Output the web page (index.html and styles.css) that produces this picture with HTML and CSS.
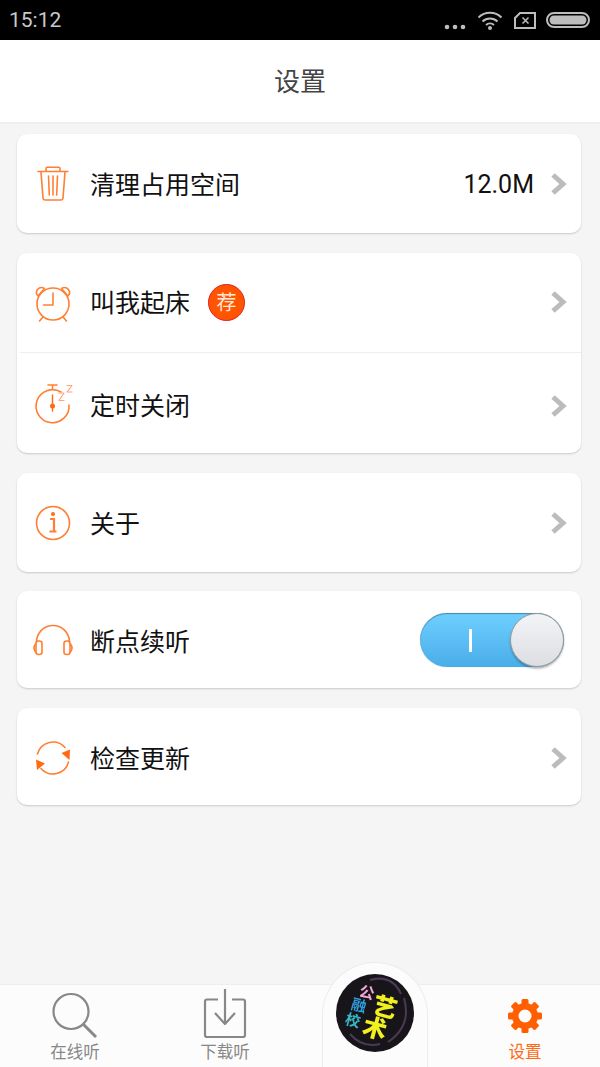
FILE: index.html
```html
<!DOCTYPE html>
<html lang="zh-CN">
<head>
<meta charset="utf-8">
<title>设置</title>
<link rel="stylesheet" href="styles.css">
</head>
<body>
<div class="screen">
  <div class="status">
    <span class="clock">15:12</span>
    <div class="status-icons">
      <svg class="s-dots" width="22" height="6" viewBox="0 0 22 6"><circle cx="3" cy="3" r="2.3"/><circle cx="11" cy="3" r="2.3"/><circle cx="19" cy="3" r="2.3"/></svg>
      <svg class="s-wifi" width="26" height="20" viewBox="0 0 26 20"><path class="s-line" d="M1.500 7.500a16.500 16.500 0 0 1 23 0M5.500 11.500a11 11 0 0 1 15 0M9 15a6 6 0 0 1 8 0"/><circle class="s-fill" cx="13" cy="18" r="2"/></svg>
      <svg class="s-sim" width="22" height="17" viewBox="0 0 22 17"><path class="s-line" d="M6 1h15v15H1V6z"/><path class="s-x" d="M8.500 5.500l6 6M14.500 5.500l-6 6"/></svg>
      <svg class="s-batt" width="44" height="16" viewBox="0 0 44 16"><rect class="s-line" x="1" y="1" width="42" height="14" rx="7"/><rect class="s-fill" x="3.500" y="3.500" width="37" height="9" rx="4.500"/></svg>
    </div>
  </div>
  <header class="title-bar"><h1 class="title">设置</h1></header>
  <main class="list">
    <section class="card">
      <div class="row row-99">
        <svg class="icon" viewBox="0 0 50 50"><path d="M10 12.500h30M18 12v-2.500q0-1.200 1.200-1.200h11.600q1.200 0 1.200 1.200V12M13 13l2 26q.2 2 2.200 2h15.600q2 0 2.200-2l2-26M20.500 17l.8 19M25 17v19M29.500 17l-.8 19"/></svg>
        <span class="label">清理占用空间</span>
        <span class="value">12.0M</span>
        <svg class="chev" viewBox="0 0 18 24"><path d="M3 3l10 9-10 9"/></svg>
      </div>
    </section>
    <section class="card">
      <div class="row row-100 row-split">
        <svg class="icon" viewBox="0 0 50 50"><circle cx="25" cy="28" r="16"/><path d="M25 17v12h-9.500M15 41l-3.500 4M35 41l3.500 4M10 20q-3-3-.5-6.500 3-3.500 7-1zM40 20q3-3 .5-6.500-3-3.500-7-1z"/></svg>
        <span class="label">叫我起床</span>
        <span class="badge">荐</span>
        <svg class="chev chev-end" viewBox="0 0 18 24"><path d="M3 3l10 9-10 9"/></svg>
      </div>
      <div class="row row-100 row-low">
        <svg class="icon" viewBox="0 0 50 50"><path d="M33 13A16.500 16.500 0 1 0 41 26M24.500 10.500V6.500M20 6h9"/><path class="needle" d="M24.500 16v16"/><circle class="solid" cx="24.500" cy="27" r="2.500"/><path class="thin" d="M31 14h5l-5 7.500h5M39 6.500h5l-5 6.500h5"/></svg>
        <span class="label">定时关闭</span>
        <svg class="chev chev-end" viewBox="0 0 18 24"><path d="M3 3l10 9-10 9"/></svg>
      </div>
    </section>
    <section class="card">
      <div class="row row-99">
        <svg class="icon" viewBox="0 0 50 50"><circle cx="25" cy="25" r="16.500"/><circle class="solid" cx="25" cy="16" r="2"/><path class="i-stem" d="M22 21h4v12M21.500 33.500h7"/></svg>
        <span class="label">关于</span>
        <svg class="chev chev-end" viewBox="0 0 18 24"><path d="M3 3l10 9-10 9"/></svg>
      </div>
    </section>
    <section class="card card-tight">
      <div class="row row-97 row-low">
        <svg class="icon" viewBox="0 0 50 50"><path d="M8.500 26a16.500 16.500 0 0 1 33 0"/><rect x="8" y="25" width="6" height="13.500" rx="2.500"/><rect x="36" y="25" width="6" height="13.500" rx="2.500"/><path d="M7.500 28q-3 4 0 8M42.500 28q3 4 0 8"/></svg>
        <span class="label">断点续听</span>
        <div class="switch"><span class="switch-mark"></span><span class="switch-knob"></span></div>
      </div>
    </section>
    <section class="card">
      <div class="row row-97 row-low">
        <svg class="icon" viewBox="0 0 50 50"><path d="M9.500 21A16 16 0 0 1 37 14.500M40.500 29A16 16 0 0 1 13 35.500"/><path class="solid" d="M42 16.500L41.500 27l-8-7zM8 26.500l1 10.500 8-6.500z"/></svg>
        <span class="label">检查更新</span>
        <svg class="chev chev-end" viewBox="0 0 18 24"><path d="M3 3l10 9-10 9"/></svg>
      </div>
    </section>
  </main>
  <nav class="tabs">
    <div class="tab">
      <svg class="tab-icon" viewBox="0 0 50 50"><circle cx="21" cy="22.500" r="17.500"/><path class="tab-handle" d="M33 35l13 13"/></svg>
      <span class="tab-label">在线听</span>
    </div>
    <div class="tab">
      <svg class="tab-icon" viewBox="0 0 50 50"><path d="M18 10.500H7q-2 0-2 2v33.500q0 2 2 2h36q2 0 2-2V12.500q0-2-2-2H32M25 0v35M15 24l10 11 10-11"/></svg>
      <span class="tab-label">下载听</span>
    </div>
    <div class="tab tab-center">
      <div class="bump">
        <svg class="logo" viewBox="0 0 78 78">
          <circle class="logo-bg" cx="39" cy="39" r="39"/>
          <path class="logo-arc" d="M34 6q22-6 31 14M68 24q8 28-16 44M14 60q12 14 30 10"/>
          <text class="lg lg-pink" x="31" y="24" transform="rotate(15 31 18)">公</text>
          <text class="lg lg-blue" x="23" y="37" transform="rotate(15 23 31)">融</text>
          <text class="lg lg-cyan" x="17" y="52" transform="rotate(15 17 46)">校</text>
          <text class="lg lg-big" x="49" y="42" transform="rotate(15 49 33)">艺</text>
          <text class="lg lg-big" x="39" y="63" transform="rotate(15 39 54)">术</text>
        </svg>
      </div>
    </div>
    <div class="tab tab-active">
      <svg class="tab-icon" viewBox="0 0 50 50">
        <g class="gear">
          <circle class="gear-ring" cx="25" cy="27" r="10.500"/>
          <rect x="21.500" y="10" width="7" height="34" rx="1.500"/>
          <rect x="21.500" y="10" width="7" height="34" rx="1.500" transform="rotate(45 25 27)"/>
          <rect x="21.500" y="10" width="7" height="34" rx="1.500" transform="rotate(90 25 27)"/>
          <rect x="21.500" y="10" width="7" height="34" rx="1.500" transform="rotate(135 25 27)"/>
          <circle class="gear-body" cx="25" cy="27" r="13"/>
          <circle class="gear-hole" cx="25" cy="27" r="6.500"/>
        </g>
      </svg>
      <span class="tab-label">设置</span>
    </div>
  </nav>
</div>
</body>
</html>
```
FILE: styles.css
```css
* { box-sizing: border-box; }
html, body { margin: 0; padding: 0; }
body {
  font-family: "Noto Sans CJK SC", "Noto Sans", sans-serif;
  background: #f5f5f5;
}
.screen {
  width: 600px;
  height: 1067px;
  display: flex;
  flex-direction: column;
  overflow: hidden;
  background: #f5f5f5;
}
.status {
  height: 40px;
  flex: none;
  background: #000;
  display: flex;
  align-items: center;
  justify-content: space-between;
  padding: 0 10px 0 9px;
}
.clock {
  font-family: Roboto, sans-serif;
  font-size: 21px;
  color: #c8c8c8;
  line-height: 40px;
}
.status-icons { display: flex; align-items: center; }
.s-dots { fill: #bdbdbd; margin-top: 14px; margin-right: 11px; }
.s-wifi { margin-right: 11px; margin-top: -1px; }
.s-sim { margin-right: 10px; }
.s-line { fill: none; stroke: #bdbdbd; stroke-width: 2; }
.s-x { fill: none; stroke: #bdbdbd; stroke-width: 1.500; }
.s-fill { fill: #bdbdbd; }
.title-bar {
  height: 84px;
  flex: none;
  background: #fff;
  border-bottom: 2px solid #eee;
  padding-bottom: 2px;
  display: flex;
  align-items: center;
  justify-content: center;
}
.title {
  margin: 0;
  font-size: 26px;
  font-weight: 400;
  color: #444;
  line-height: 1;
}
.list {
  flex: 1;
  display: flex;
  flex-direction: column;
  gap: 20px;
  padding: 10px 19px 0 17px;
}
.card {
  background: #fff;
  border-radius: 10px;
  box-shadow: 0 1px 2px rgba(0, 0, 0, .18);
}
.card-tight { margin-top: -1px; }
.row {
  display: flex;
  align-items: center;
  padding-right: 13px;
}
.row-99 { height: 99px; }
.row-100 { height: 100px; }
.row-97 { height: 97px; }
.row-split {
  border-bottom: 1px solid #eee;
  margin-left: 3px;
  padding-bottom: 3px;
}
.row-split .icon { margin-left: 8px; }
.row-split .chev { margin-top: 2px; }
.row-100.row-low .chev { margin-top: 4px; }
.row-low { padding-top: 2px; }
.icon {
  width: 50px;
  height: 50px;
  flex: none;
  margin-left: 11px;
  margin-right: 12px;
  fill: none;
  stroke: #ff7f33;
  stroke-width: 1.600;
  stroke-linecap: round;
  stroke-linejoin: round;
}
.icon .solid { fill: #ff6a13; stroke: none; }
.icon .needle { stroke: #ff6a13; stroke-width: 1.400; }
.icon .thin { stroke-width: 1.200; stroke: #ffa878; }
.icon .i-stem { stroke-width: 2.200; stroke-linecap: butt; stroke-linejoin: miter; }
.label {
  font-size: 25px;
  color: #111;
  line-height: 1;
  white-space: nowrap;
}
.value {
  margin-left: auto;
  margin-right: 16px;
  margin-top: 2px;
  font-family: Roboto, sans-serif;
  font-size: 25px;
  color: #111;
  line-height: 1;
}
.chev {
  width: 18px;
  height: 24px;
  flex: none;
  fill: none;
  stroke: #bcbcbc;
  stroke-width: 5;
}
.chev-end { margin-left: auto; }
.badge {
  width: 37px;
  height: 37px;
  flex: none;
  margin-left: 18px;
  margin-top: 2px;
  border-radius: 50%;
  background: #ff5400;
  border: 1.500px solid #e2202a;
  color: #ffe9dc;
  font-size: 20px;
  line-height: 33px;
  text-align: center;
}
.switch {
  margin-left: auto;
  margin-right: 4px;
  margin-top: -1px;
  width: 144px;
  height: 54px;
  position: relative;
  display: flex;
  align-items: center;
  padding-left: 49px;
  border-radius: 27px;
  background: linear-gradient(#6fcfff, #49ade8);
  box-shadow: inset 0 1px 1px rgba(0, 0, 0, .35), 0 0 1px rgba(0, 0, 0, .3);
}
.switch-mark {
  width: 3px;
  height: 23px;
  background: #fff;
}
.switch-knob {
  position: absolute;
  right: 0;
  top: 0;
  width: 54px;
  height: 54px;
  border-radius: 50%;
  background: linear-gradient(#f3f4f6, #dcdee2);
  border: 1.500px solid #9a9a9a;
  box-shadow: 0 2px 2px rgba(0, 0, 0, .25);
}
.tabs {
  height: 83px;
  flex: none;
  background: #fcfcfc;
  border-top: 1px solid #eee;
  display: flex;
}
.tab {
  width: 150px;
  flex: none;
  display: flex;
  flex-direction: column;
  align-items: center;
  position: relative;
}
.tab-icon {
  width: 50px;
  height: 50px;
  margin-top: 4px;
  fill: none;
  stroke: #888;
  stroke-width: 2.200;
  stroke-linejoin: round;
}
.tab-handle { stroke-width: 3; }
.tab-label {
  font-size: 16.500px;
  line-height: 16px;
  margin-top: 4px;
  color: #888;
}
.tab-active .tab-label { color: #ff6a13; }
.gear rect, .gear-body { fill: #ff5f00; stroke: none; }
.gear-ring { fill: #ff5f00; stroke: none; }
.gear .gear-hole { fill: #fcfcfc; stroke: none; }
.bump {
  position: absolute;
  left: 22px;
  top: -23px;
  width: 106px;
  height: 106px;
  border: 1.500px solid #ececec;
  border-bottom: 0;
  border-radius: 53px 53px 0 0;
  background: #fcfcfc;
  display: flex;
  justify-content: center;
  padding-top: 11px;
}
.logo { width: 78px; height: 78px; flex: none; filter: blur(.4px); }
.logo-bg { fill: #17151a; }
.logo-arc { fill: none; stroke: #4a3a55; stroke-width: 2; }
.lg { font-size: 15px; font-weight: 700; text-anchor: middle; }
.lg-pink { fill: #f3a6d8; }
.lg-blue { fill: #2f9fe0; }
.lg-cyan { fill: #35b8c8; }
.lg .lg-big, .lg-big { fill: #f2f01e; font-size: 24px; font-weight: 900; }
```
